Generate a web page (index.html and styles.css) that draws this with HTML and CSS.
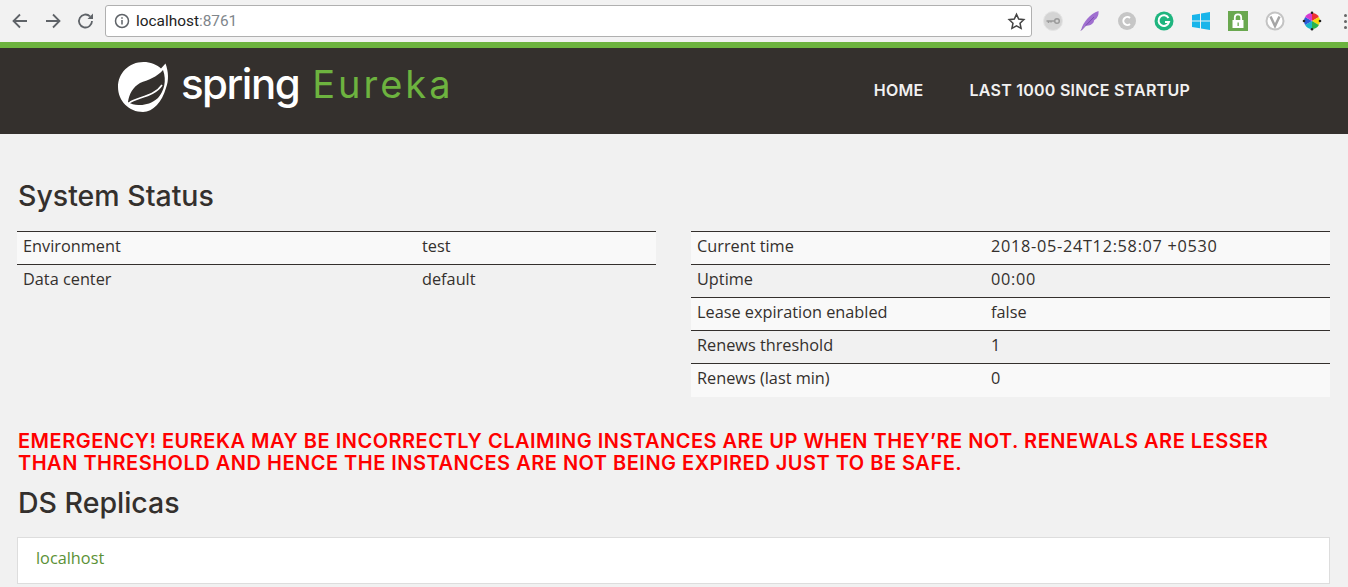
FILE: index.html
```html
<!DOCTYPE html>
<html lang="en">
<head>
    <meta charset="UTF-8">
    <title>Eureka</title>
    <link rel="stylesheet" href="styles.css">
</head>
<body>
    <div class="toolbar">
        <svg class="tool" viewBox="0 0 20 20"><path d="M17 10H4M10 3.5L3.5 10l6.500 6.500"/></svg>
        <svg class="tool" viewBox="0 0 20 20"><path d="M3 10h13M10 3.500L16.500 10 10 16.500"/></svg>
        <svg class="tool" viewBox="0 0 20 20"><path d="M16 10a6.500 6.500 0 1 1-2-4.700"/><path class="solid" d="M17 2.500V8h-5.500z"/></svg>
        <div class="omnibox">
            <svg class="info" viewBox="0 0 16 16"><circle cx="8" cy="8" r="6.500"/><path d="M8 7v4.500M8 4.200v1.500"/></svg>
            <span class="host">localhost</span><span class="port">:8761</span>
            <svg class="star" viewBox="0 0 20 20"><path d="M10 2.500l2.300 5 5.400.6-4 3.700 1.100 5.400-4.800-2.700-4.800 2.700 1.100-5.400-4-3.700 5.400-.6z"/></svg>
        </div>
        <div class="extensions">
            <svg class="ext" viewBox="0 0 20 20"><circle cx="10" cy="10" r="9.500" fill="#d4d4d4" stroke="#e4e4e4"/><circle cx="14" cy="10" r="2.300" fill="none" stroke="#9a9a9a" stroke-width="1.500"/><path d="M3.500 10h8.500M5.500 10v2M8 10v1.500" fill="none" stroke="#9a9a9a" stroke-width="1.500"/></svg>
            <svg class="ext" viewBox="0 0 20 20"><path d="M1 19.500C3 11 10 3 18.500 0c.5 5-2 8-4.500 9.500 0 3-4 6-9 5z" fill="#a06fd0"/><path d="M1 19.500L14 6" stroke="#7d4eb0" stroke-width="1"/></svg>
            <svg class="ext" viewBox="0 0 20 20"><circle cx="10" cy="10" r="9" fill="#c6c6c6"/><path d="M13 7a4 4 0 1 0 0 6" fill="none" stroke="#fff" stroke-width="2"/></svg>
            <svg class="ext" viewBox="0 0 20 20"><circle cx="10" cy="10" r="9.500" fill="#1fb57f"/><path d="M14.500 7a5.300 5.300 0 1 0 .5 4h-4" fill="none" stroke="#fff" stroke-width="2"/></svg>
            <svg class="ext" viewBox="0 0 20 20"><path d="M1 4l8-1.200V9.500H1zM10 2.600L19 1v8.500h-9zM1 10.500h8v6.700L1 16zM10 10.500h9V19l-9-1.600z" fill="#19b5ea"/></svg>
            <svg class="ext" viewBox="0 0 20 20"><path d="M0 0h20v20H0z" fill="#6aa84f"/><path d="M4.500 9h11v8h-11z" fill="#fff"/><path d="M6.800 9V6.500a3.200 3.200 0 0 1 6.400 0V9" fill="none" stroke="#fff" stroke-width="1.800"/><path d="M9.500 11.500h1.300v3.500H9.500z" fill="#6aa84f"/></svg>
            <svg class="ext" viewBox="0 0 20 20"><circle cx="10" cy="10" r="8.500" fill="#fff" stroke="#c4c4c4" stroke-width="2"/><path d="M5.500 5.500L10 15l4.500-9.500" fill="none" stroke="#a5a5a5" stroke-width="2.500"/></svg>
            <svg class="ext" viewBox="0 0 20 20"><path d="M10 10L10 2a8 8 0 0 1 6.900 4z" fill="#e33"/><path d="M10 10l6.900-4a8 8 0 0 1 0 8z" fill="#f5d90a"/><path d="M10 10l6.900 4A8 8 0 0 1 10 18z" fill="#2ab34a"/><path d="M10 10v8a8 8 0 0 1-6.900-4z" fill="#18b6c9"/><path d="M10 10l-6.900 4a8 8 0 0 1 0-8z" fill="#2b5bd7"/><path d="M10 10L3.100 6A8 8 0 0 1 10 2z" fill="#d63ad0"/><circle cx="10" cy="1.800" r="1.300" fill="#222"/><circle cx="18" cy="10" r="1.300" fill="#222"/><circle cx="10" cy="18.200" r="1.300" fill="#222"/><circle cx="2" cy="10" r="1.300" fill="#222"/></svg>
            <div class="menu-dots"><i></i><i></i><i></i></div>
        </div>
    </div>

    <nav class="navbar">
        <div class="brand">
            <svg class="leaf" viewBox="0 0 51 50">
                <path fill="#fff" d="M25.500 0c7 0 13 2.500 17.500 6.500L47.500 1.500c3 8 3.500 17 .5 24.500-4 14-13 24-23 24C11 50 0 39 0 25S11 0 25.500 0z"/>
                <path fill="#34302d" d="M45 8c4 11 1 21-5 28-6 5-12 7-18 7-4 .5-9-1-12-3 1-8 5-15 12-19 8-3 17-6 23-13z"/>
                <path fill="none" stroke="#fff" stroke-width="1.500" d="M11 41c8-6 25-6 33-18"/>
            </svg>
            <span class="spring">spring</span>
            <span class="eureka">Eureka</span>
        </div>
        <ul class="nav-links">
            <li>Home</li>
            <li>Last 1000 since startup</li>
        </ul>
    </nav>

    <div class="container">
        <h1>System Status</h1>
        <div class="columns">
            <table>
                <tr><td class="name">Environment</td><td>test</td></tr>
                <tr><td class="name">Data center</td><td>default</td></tr>
            </table>
            <table class="wide-name">
                <tr><td class="name">Current time</td><td class="num">2018-05-24T12:58:07 +0530</td></tr>
                <tr><td class="name">Uptime</td><td class="num">00:00</td></tr>
                <tr><td class="name">Lease expiration enabled</td><td>false</td></tr>
                <tr><td class="name">Renews threshold</td><td class="num">1</td></tr>
                <tr><td class="name">Renews (last min)</td><td class="num">0</td></tr>
            </table>
        </div>
        <h4 class="emergency">Emergency! Eureka may be incorrectly claiming instances are up when they’re not. Renewals are lesser than threshold and hence the instances are not being expired just to be safe.</h4>
        <h1 class="replicas">DS Replicas</h1>
        <ul class="replica-list">
            <li>localhost</li>
        </ul>
    </div>
</body>
</html>
```

FILE: styles.css
```css
html, body {
    margin: 0;
    height: 587px;
    overflow: hidden;
}
body {
    font-family: "Open Sans", "Liberation Sans", sans-serif;
    background-color: #f1f1f1;
    color: #34302d;
}
.toolbar {
    display: flex;
    align-items: center;
    height: 42px;
    background-color: #f2f2f2;
    padding-left: 10px;
    box-sizing: border-box;
    overflow: hidden;
}
.tool {
    flex: none;
    width: 20px;
    height: 20px;
    margin-right: 13px;
    fill: none;
    stroke: #5f6368;
    stroke-width: 1.800;
}
.tool:nth-child(3) {
    margin-right: 9px;
}
.tool .solid {
    fill: #5f6368;
    stroke: none;
}
.omnibox {
    flex: none;
    display: flex;
    align-items: center;
    width: 927px;
    height: 32px;
    box-sizing: border-box;
    background: white;
    border: 1px solid #b0b0b0;
    border-radius: 3px;
    padding: 0 5px 0 8px;
    font-size: 15.400px;
    font-family: "Roboto", sans-serif;
}
.info {
    width: 16px;
    height: 16px;
    margin-right: 6px;
    fill: none;
    stroke: #5f6368;
    stroke-width: 1.500;
}
.host {
    color: #222;
}
.port {
    color: #80868b;
}
.star {
    width: 19px;
    height: 19px;
    margin-left: auto;
    fill: none;
    stroke: #444;
    stroke-width: 1.600;
}
.extensions {
    flex: none;
    display: flex;
    align-items: center;
    gap: 17px;
    margin-left: 11px;
}
.ext {
    flex: none;
    width: 20px;
    height: 20px;
}
.menu-dots {
    display: flex;
    flex-direction: column;
    gap: 3px;
    margin-left: 5px;
}
.menu-dots i {
    display: block;
    width: 3px;
    height: 3px;
    border-radius: 50%;
    background: #666;
}
.navbar {
    display: flex;
    align-items: center;
    justify-content: space-between;
    height: 86px;
    background-color: #34302d;
    border-top: 6px solid #6db33f;
    padding-left: 118px;
    padding-right: 158px;
}
.brand {
    display: flex;
    align-items: center;
    margin-top: -8px;
    font-family: "Inter", sans-serif;
}
.leaf {
    width: 51px;
    height: 50px;
    margin-right: 12px;
}
.spring {
    font-size: 42px;
    font-weight: 500;
    line-height: 40px;
    color: white;
    letter-spacing: -1.500px;
    margin-right: 13px;
    margin-bottom: 6px;
}
.eureka {
    font-size: 38px;
    font-weight: 400;
    line-height: 40px;
    color: #6db33f;
    letter-spacing: 3px;
    margin-bottom: 6px;
}
.nav-links {
    display: flex;
    gap: 46px;
    list-style: none;
    margin: 0 0 2px;
    padding: 0;
    color: #f1f1f1;
    font-family: "Inter", sans-serif;
    font-size: 16px;
    font-weight: 600;
    letter-spacing: 0.250px;
    text-transform: uppercase;
}
.container {
    padding: 0 18px 0 17px;
}
h1 {
    font-family: "Inter", sans-serif;
    font-size: 28.500px;
    font-weight: 500;
    line-height: 32px;
    margin: 0;
    padding-left: 1px;
}
.container > h1:first-child {
    padding-top: 46px;
    padding-bottom: 19px;
}
.columns {
    display: grid;
    grid-template-columns: 639px 639px;
    column-gap: 35px;
    align-items: start;
}
table {
    width: 100%;
    table-layout: fixed;
    border-collapse: collapse;
    font-size: 16.300px;
}
tr {
    height: 33px;
    border-top: 1px solid #34302d;
}
tr:nth-child(odd) {
    background-color: #f9f9f9;
}
td {
    padding: 0 6px 4px;
}
.num {
    letter-spacing: 0.700px;
}
.name {
    width: 387px;
}
.wide-name .name {
    width: 282px;
}
.emergency {
    margin: 33px 0 0;
    padding-left: 1px;
    color: red;
    font-family: "Inter", sans-serif;
    font-size: 20px;
    font-weight: 600;
    line-height: 22px;
    letter-spacing: 0.500px;
    text-transform: uppercase;
}
.replicas {
    margin-top: 13px;
}
.replica-list {
    list-style: none;
    margin: 18px 0 0;
    padding: 0 18px;
    height: 47px;
    line-height: 41px;
    box-sizing: border-box;
    background: white;
    border: 1px solid #ddd;
    color: #5b9136;
    font-size: 16.300px;
}
```
